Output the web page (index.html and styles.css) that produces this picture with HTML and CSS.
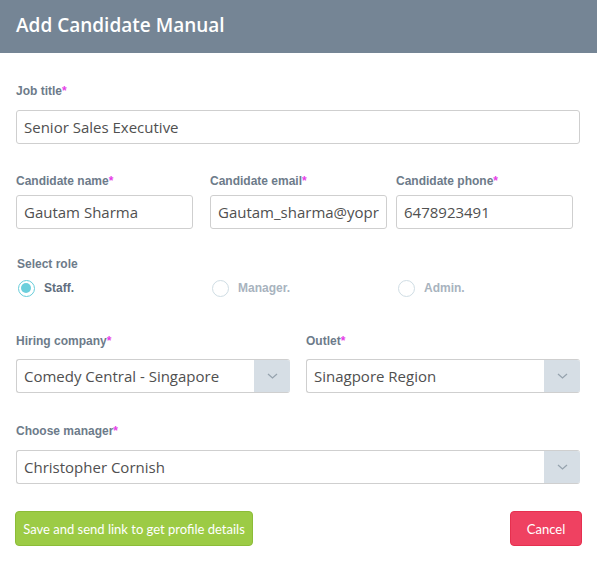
FILE: index.html
```html
<!DOCTYPE html>
<html>
<head>
<meta charset="utf-8">
<link rel="stylesheet" href="styles.css">
</head>
<body>
<div class="modal">
  <div class="header"><h1 class="title">Add Candidate Manual</h1></div>
  <div class="form">
    <div class="group g-job">
      <div class="label">Job title<span class="req">*</span></div>
      <div class="input">Senior Sales Executive</div>
    </div>
    <div class="group g-cand three">
      <div class="col">
        <div class="label">Candidate name<span class="req">*</span></div>
        <div class="input">Gautam Sharma</div>
      </div>
      <div class="col">
        <div class="label">Candidate email<span class="req">*</span></div>
        <div class="input email">Gautam_sharma@yopr</div>
      </div>
      <div class="col">
        <div class="label">Candidate phone<span class="req">*</span></div>
        <div class="input">6478923491</div>
      </div>
    </div>
    <div class="group g-role">
      <div class="label">Select role</div>
      <div class="three radios">
        <div class="radio on"><span class="dot"></span><span class="rlabel">Staff.</span></div>
        <div class="radio"><span class="dot"></span><span class="rlabel">Manager.</span></div>
        <div class="radio"><span class="dot"></span><span class="rlabel">Admin.</span></div>
      </div>
    </div>
    <div class="group g-hire two">
      <div class="col">
        <div class="label">Hiring company<span class="req">*</span></div>
        <div class="select"><span class="val">Comedy Central - Singapore</span><span class="arrow"><svg width="11" height="6" viewBox="0 0 11 6"><path d="M1 1l4.5 4L10 1" fill="none" stroke="#96a3ae" stroke-width="1.3"/></svg></span></div>
      </div>
      <div class="col">
        <div class="label">Outlet<span class="req">*</span></div>
        <div class="select"><span class="val">Sinagpore Region</span><span class="arrow"><svg width="11" height="6" viewBox="0 0 11 6"><path d="M1 1l4.5 4L10 1" fill="none" stroke="#96a3ae" stroke-width="1.3"/></svg></span></div>
      </div>
    </div>
    <div class="group g-mgr">
      <div class="label">Choose manager<span class="req">*</span></div>
      <div class="select"><span class="val">Christopher Cornish</span><span class="arrow"><svg width="11" height="6" viewBox="0 0 11 6"><path d="M1 1l4.5 4L10 1" fill="none" stroke="#96a3ae" stroke-width="1.3"/></svg></span></div>
    </div>
    <div class="actions">
      <button class="btn save">Save and send link to get profile details</button>
      <button class="btn cancel">Cancel</button>
    </div>
  </div>
</div>
</body>
</html>
```
FILE: styles.css
```css
html, body { margin: 0; padding: 0; background: #fff; }
.modal { width: 597px; }
.header {
  height: 53px;
  background: #758595;
  display: flex;
  align-items: center;
  padding-left: 16px;
  box-sizing: border-box;
}
.title {
  margin: 0;
  color: #fff;
  font-family: "Open Sans", sans-serif;
  font-weight: 600;
  font-size: 19px;
  line-height: 22px;
  padding-bottom: 3px;
}
.form { padding: 31px 17px 0 16px; }
.label {
  font-family: "Liberation Sans", Arial, sans-serif;
  font-weight: bold;
  font-size: 12px;
  line-height: 14px;
  height: 14px;
  color: #6d7b8a;
}
.req { color: #e53fe6; }
.input, .select {
  height: 34px;
  box-sizing: border-box;
  border: 1px solid #cfcfcf;
  border-radius: 3px;
  background: #fff;
  font-family: "Open Sans", sans-serif;
  font-size: 15px;
  color: #505050;
  line-height: 32px;
  padding-left: 7px;
  white-space: nowrap;
  overflow: hidden;
}
.g-job .label { margin-bottom: 12px; }
.g-cand { margin-top: 30px; }
.g-cand .label { margin-bottom: 7px; }
.three { display: grid; grid-template-columns: 194px 186px 177px; }
.g-cand .input { width: 177px; padding-right: 0; }
.g-role { margin-top: 28px; }
.g-role .label { padding-left: 1px; }
.radios { margin-top: 8px; padding-left: 2px; }
.radio { display: flex; align-items: center; height: 18px; }
.dot {
  width: 17px; height: 17px; box-sizing: border-box;
  border: 1px solid #cfdde4;
  border-radius: 50%;
  margin-right: 9px;
  position: relative;
  flex: none;
}
.radio.on .dot { border: 1.5px solid #67cdda; }
.radio.on .dot::after {
  content: ""; position: absolute; left: 2px; top: 2px;
  width: 10px; height: 10px; border-radius: 50%; background: #6bcfdc;
}
.rlabel {
  font-family: "Liberation Sans", Arial, sans-serif;
  font-weight: bold; font-size: 12px; color: #a8b3be;
}
.radio.on .rlabel { color: #5f6e7d; }
.two { display: grid; grid-template-columns: 274px 274px; column-gap: 16px; }
.g-hire { margin-top: 37px; }
.g-hire .label { margin-bottom: 11px; }
.g-mgr { margin-top: 31px; }
.g-mgr .label { margin-bottom: 12px; }
.select { display: flex; padding-right: 0; border-right: none; }
.select .val { flex: 1; }
.arrow {
  width: 36px; flex: none;
  background: #d6dee5;
  display: flex; align-items: center; justify-content: center;
  margin: -1px 0; border-radius: 0 3px 3px 0;
}
.actions { display: flex; justify-content: space-between; margin-top: 27px; margin-left: -1px; margin-right: -2px; }
.btn {
  height: 35px;
  border-radius: 4px;
  font-family: Lato, sans-serif;
  font-size: 13px;
  color: #fff;
  padding: 0;
  cursor: pointer;
}
.save { width: 238px; background: #9ccb45; border: 1px solid #8cbc38; }
.cancel { width: 72px; background: #ef4161; border: 1px solid #e6304f; }
```
